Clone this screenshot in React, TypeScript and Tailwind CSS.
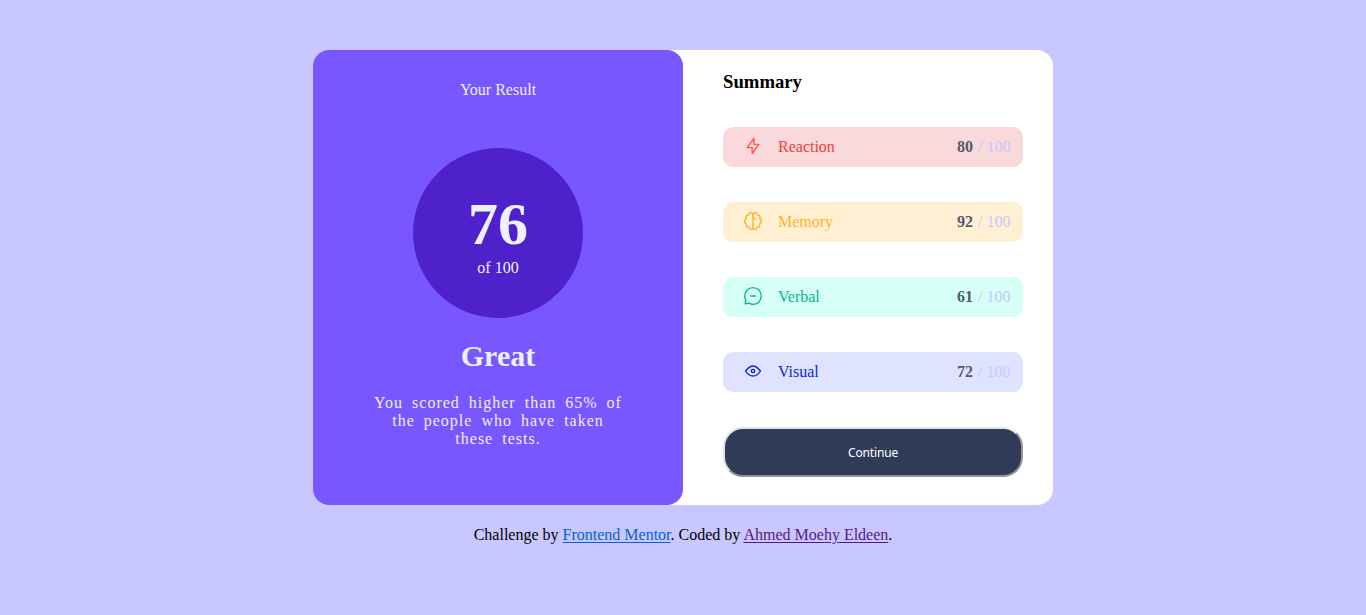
import React from 'react';

type Row = { name: string; score: number; box: string; icon: React.ReactNode };

const rows: Row[] = [
  {
    name: 'Reaction', score: 80, box: 'bg-[#f9d9da] text-[#f04040]',
    icon: <path stroke="#F55" strokeLinecap="round" strokeLinejoin="round" strokeWidth="1.4" d="M10.833 8.333V2.5l-6.666 9.167h5V17.5l6.666-9.167h-5Z" />,
  },
  {
    name: 'Memory', score: 92, box: 'bg-[#fff0d4] text-[#ffb21e]',
    icon: (
      <g stroke="#FFB21E" strokeLinecap="round" strokeLinejoin="round" strokeWidth="1.4">
        <path d="M10 3.2v14M10 3.2C9.2 1 5.9 1.200 5.500 4 3.400 3.900 2.400 5.900 3.300 7.500 1 8.600 1 11.800 3.300 12.800c-.6 2 .6 3.500 2.500 3.500.6 2.500 3.700 2.700 4.200.9" />
        <path d="M10 3.200C10.800 1 14.100 1.200 14.500 4c2.100-.1 3.100 1.900 2.200 3.500 2.300 1.100 2.300 4.300 0 5.300.6 2-.6 3.500-2.500 3.500-.6 2.500-3.700 2.700-4.200.9M10 6.200c.3 1.200 1.200 1.700 2.300 1.700" />
      </g>
    ),
  },
  {
    name: 'Verbal', score: 61, box: 'bg-[#d6fff5] text-[#00bb8f]',
    icon: <path stroke="#00BB8F" strokeLinecap="round" strokeLinejoin="round" strokeWidth="1.4" d="M7.5 10h5M10 18.333A8.333 8.333 0 1 0 1.667 10c0 1.518.406 2.942 1.115 4.167l-.699 3.75 3.75-.699A8.295 8.295 0 0 0 10 18.333Z" />,
  },
  {
    name: 'Visual', score: 72, box: 'bg-[#dfe3ff] text-[#1125d6]',
    icon: (
      <g stroke="#1125D6" strokeLinejoin="round" strokeWidth="1.4">
        <circle cx="10" cy="10" r="1.667" />
        <path d="M17.5 10c-1.574 2.492-4.402 5-7.5 5s-5.926-2.508-7.5-5C4.416 7.632 6.66 5 10 5s5.584 2.632 7.5 5Z" />
      </g>
    ),
  },
];

export default function App() {
  return (
    <main className="flex h-[615px] flex-col items-center bg-[#c8c7ff] pt-[50px] font-['Liberation_Serif',serif] text-base leading-[18px] text-black">
      <div className="flex h-[455px] w-[740px] rounded-2xl bg-white">
        <section className="flex w-[370px] flex-col items-center rounded-2xl bg-[#7857ff] pt-[31px] text-[#ebf1ff]">
          <p>Your Result</p>
          <div className="mt-[49px] flex h-[170px] w-[170px] flex-col items-center rounded-full bg-[#4e21ca] pt-[42px]">
            <strong className="text-[60px] leading-[69px]">76</strong>
            <span>of 100</span>
          </div>
          <h1 className="mt-[20px] text-[30px] leading-9 font-bold">Great</h1>
          <p className="mt-[20px] w-[254px] text-center tracking-[1px] [word-spacing:4px]">You scored higher than 65% of the people who have taken these tests.</p>
        </section>
        <section className="w-[370px] pt-[22px] pr-[30px] pl-10">
          <h2 className="text-[18.72px] leading-5 font-bold">Summary</h2>
          <ul className="mt-[35px] flex flex-col gap-[35px]">
            {rows.map((r) => (
              <li key={r.name} className={`flex h-10 items-center rounded-[10px] pr-[12.5px] pl-5 ${r.box}`}>
                <svg className="mb-0.5 h-5 w-5" viewBox="0 0 20 20" fill="none">{r.icon}</svg>
                <span className="ml-[15px] flex-1">{r.name}</span>
                <span className="text-[#c8c7ff]"><b className="mr-px text-[#535971]">{r.score}</b> / 100</span>
              </li>
            ))}
          </ul>
          <button className="mt-[35px] h-[50px] w-full rounded-[20px] border-2 border-t-[#e3e3e3] border-r-[#949494] border-b-[#949494] border-l-[#e3e3e3] bg-[#303b59] pt-px font-['Noto_Sans',sans-serif] text-xs tracking-[-0.15px] text-white">Continue</button>
        </section>
      </div>
      <footer className="mt-[21px]">
        Challenge by <a className="text-[#0066cc] underline underline-offset-2" href="#">Frontend Mentor</a>. Coded by <a className="text-[#551a8b] underline underline-offset-2" href="#">Ahmed Moehy Eldeen</a>.
      </footer>
    </main>
  );
}
